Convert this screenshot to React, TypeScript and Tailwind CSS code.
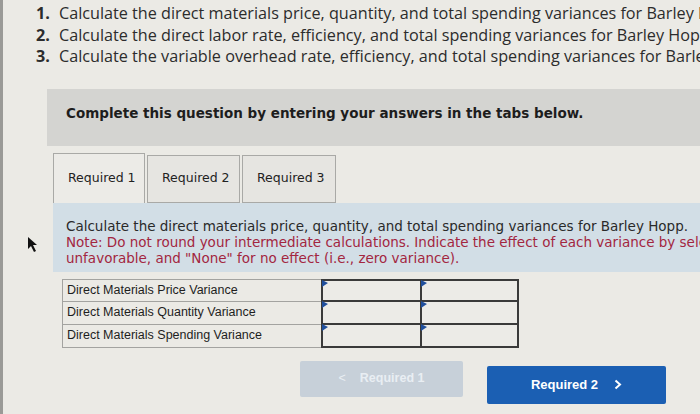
import React from "react";

const Marker = () => (
  <svg className="absolute left-[-1px] top-[-1px]" width="6" height="8" viewBox="0 0 6 8">
    <polygon points="0,0 6,3 0,7" fill="#1f4e9c" />
  </svg>
);

export default function App() {
  const rows = [
    "Direct Materials Price Variance",
    "Direct Materials Quantity Variance",
    "Direct Materials Spending Variance",
  ];
  return (
    <div className="relative w-[700px] h-[414px] overflow-hidden bg-[#ebeae5] border-l-[3px] border-[#9a9a97]">
      <ol
        className="pt-[3px] pl-[33px] whitespace-nowrap text-[16.2px] leading-[21.5px] text-[#2c2c2c]"
        style={{ fontFamily: '"Open Sans", sans-serif' }}
      >
        <li className="flex"><span className="w-[23px] shrink-0 font-bold">1.</span><span>Calculate the direct materials price, quantity, and total spending variances for Barley Hopp.</span></li>
        <li className="flex"><span className="w-[23px] shrink-0 font-bold">2.</span><span>Calculate the direct labor rate, efficiency, and total spending variances for Barley Hopp.</span></li>
        <li className="flex"><span className="w-[23px] shrink-0 font-bold">3.</span><span>Calculate the variable overhead rate, efficiency, and total spending variances for Barley Hopp.</span></li>
      </ol>

      <div
        className="ml-[44px] mt-[21px] h-[57px] bg-[#d4d4d1] pl-[19px] pt-[14px] text-[13.5px] font-bold text-[#1d1d1d] whitespace-nowrap"
        style={{ fontFamily: '"DejaVu Sans", Verdana, sans-serif' }}
      >
        Complete this question by entering your answers in the tabs below.
      </div>

      <div className="ml-[50px] mt-[7px]" style={{ fontFamily: '"DejaVu Sans", Verdana, sans-serif' }}>
        <div className="flex items-end gap-[2px] h-[50px]">
          <div className="w-[92px] h-[50px] border border-b-0 border-[#a9a9a6] bg-[#ecebe7] flex items-center pl-[14px] text-[12.5px] text-[#222]">Required 1</div>
          <div className="w-[93px] h-[48px] border border-[#a9a9a6] bg-[#e6e5e1] flex items-center pl-[14px] text-[12.5px] text-[#222]">Required 2</div>
          <div className="w-[94px] h-[48px] border border-[#a9a9a6] bg-[#e6e5e1] flex items-center pl-[14px] text-[12.5px] text-[#222]">Required 3</div>
        </div>
        <div className="h-[69px] bg-[#d2dee6] pl-[13px] pt-[15px] text-[13.5px] leading-[16px] whitespace-nowrap">
          <div className="text-[#2a2a2a]">Calculate the direct materials price, quantity, and total spending variances for Barley Hopp.</div>
          <div className="text-[#a3263f]">Note: Do not round your intermediate calculations. Indicate the effect of each variance by selecting "F" for favorable, "U" for</div>
          <div className="text-[#a3263f]">unfavorable, and "None" for no effect (i.e., zero variance).</div>
        </div>
      </div>

      <div className="ml-[59px] mt-[7px] w-[457px]" style={{ fontFamily: '"Liberation Sans", Arial, sans-serif' }}>
        {rows.map((r, i) => (
          <div key={r} className="flex h-[23px]">
            <div className={`w-[259px] border border-r-0 border-[#a3a3a0] ${i > 0 ? "border-t-0" : ""} flex items-center pl-[4px] text-[12.5px] text-[#1e1e1e] bg-[#ebeae5]`}>{r}</div>
            <div className={`relative w-[101px] border-2 border-[#3a3a3a] ${i > 0 ? "border-t-0" : ""} bg-[#ecebe7]`}><Marker /></div>
            <div className={`relative w-[97px] border-2 border-l-0 border-[#3a3a3a] ${i > 0 ? "border-t-0" : ""} bg-[#ecebe7]`}><Marker /></div>
          </div>
        ))}
      </div>

      <div className="flex mt-[12px] ml-[297px] gap-[24px]" style={{ fontFamily: '"Liberation Sans", Arial, sans-serif' }}>
        <div className="w-[163px] h-[36px] mt-[1px] bg-[#c7d0d9] rounded-[2px] flex items-center justify-center gap-[14px] text-[12.5px] font-bold text-[#e9eef3]">
          <span className="font-normal">&lt;</span>Required 1
        </div>
        <div className="w-[179px] h-[38px] mt-[6px] bg-[#1b5fb3] rounded-[2px] flex items-center justify-center gap-[16px] text-[13px] font-bold text-white">
          Required 2
          <svg width="8" height="11" viewBox="0 0 8 11"><polyline points="1.5,1.5 6,5.5 1.5,9.5" fill="none" stroke="white" strokeWidth="2" /></svg>
        </div>
      </div>

      <svg className="absolute left-[24px] top-[236px]" width="12" height="17" viewBox="0 0 12 17">
        <polygon points="1,1 1,13 4,10 7,16 9,15 6,9 10,9" fill="#111" />
      </svg>
    </div>
  );
}
